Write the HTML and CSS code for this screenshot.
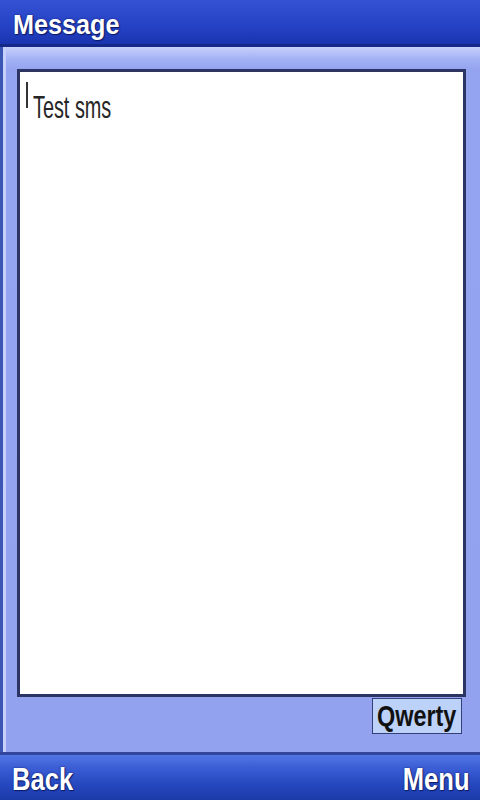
FILE: index.html
```html
<!DOCTYPE html>
<html lang="en">
<head>
    <meta charset="UTF-8">
    <meta name="viewport" content="width=device-width, initial-scale=1.0">
    <title>Message</title>
    <link rel="stylesheet" href="styles.css">
</head>
<body>

    <div class="screen">
        <div class="titlebar">
            <span class="label title">Message</span>
        </div>

        <div class="content">
            <div class="editor">
                <span class="cursor"></span>
                <span class="text">Test sms</span>
            </div>
            <div class="mode-row">
                <div class="mode"><span class="mode-text">Qwerty</span></div>
            </div>
        </div>

        <div class="softkeys">
            <span class="label key-left">Back</span>
            <span class="label key-right">Menu</span>
        </div>
    </div>

</body>
</html>
```

FILE: styles.css
```css
body {
    margin: 0;
    font-family: "Liberation Sans", Arial, sans-serif;
}
.screen {
    width: 480px;
    height: 800px;
    display: flex;
    flex-direction: column;
    overflow: hidden;
}
.titlebar {
    height: 33px;
    padding: 11px 0 0 13px;
    background: linear-gradient(#3452d4, #2642c4 60%, #1a34b0);
    border-bottom: 3px solid #142888;
}
.label {
    display: inline-block;
    color: #ffffff;
    font-weight: bold;
    text-shadow: 0 0 2px #0c1a66, 1px 1px 1px #0c1a66;
}
.title {
    font-size: 28px;
    line-height: 28px;
    transform: scaleX(0.9);
    transform-origin: left;
}
.content {
    flex: 1;
    display: flex;
    flex-direction: column;
    padding: 22px 0 0 17px;
    background:
        linear-gradient(to right, #3a55b4 0 3px, #c6d0fa 3px 6px, transparent 6px),
        linear-gradient(#c6d0fa 0, #a4b2f4 12px, #94a4f0 22px, #92a2ef 100%);
    border-bottom: 3px solid #34469c;
}
.editor {
    width: 443px;
    height: 612px;
    border: 3px solid #2c3464;
    background: #ffffff;
    display: flex;
    align-items: flex-start;
    padding-top: 10px;
}
.cursor {
    width: 2px;
    height: 26px;
    margin-left: 6px;
    background: #333333;
}
.text {
    display: inline-block;
    margin: 9px 0 0 5px;
    font-size: 32px;
    line-height: 32px;
    color: #262626;
    transform: scaleX(0.62);
    transform-origin: left;
    white-space: nowrap;
}
.mode-row {
    display: flex;
    justify-content: flex-end;
    padding-right: 18px;
    margin-top: 1px;
}
.mode {
    width: 84px;
    height: 34px;
    border: 1px solid #34407a;
    background: #bcd2f8;
    padding-left: 4px;
    overflow: hidden;
}
.mode-text {
    display: inline-block;
    margin-top: 2px;
    font-size: 30px;
    line-height: 30px;
    font-weight: bold;
    color: #111111;
    transform: scaleX(0.78);
    transform-origin: left;
}
.softkeys {
    height: 37px;
    padding: 8px 10px 0 12px;
    display: flex;
    justify-content: space-between;
    background: linear-gradient(#5276e4, #3a5cd4 30%, #2446bc 70%, #1c3aa8);
}
.key-left,
.key-right {
    font-size: 32px;
    line-height: 32px;
    transform: scaleX(0.8);
}
.key-left {
    transform-origin: left;
}
.key-right {
    transform-origin: right;
}
```
